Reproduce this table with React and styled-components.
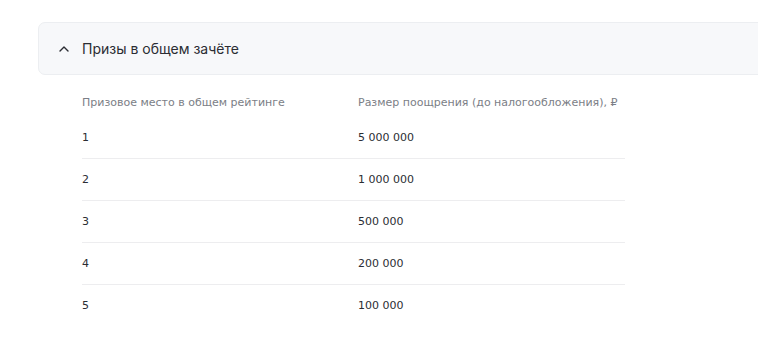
import React from 'react';
import styled, { createGlobalStyle } from 'styled-components';

const GlobalStyle = createGlobalStyle`
  html, body {
    margin: 0;
    padding: 0;
    background: #ffffff;
    overflow: hidden;
  }
`;

const Page = styled.div`
  padding: 22px 0 0 38px;
  width: 758px;
  box-sizing: border-box;
`;

const AccordionHeader = styled.button`
  display: flex;
  align-items: center;
  gap: 11px;
  width: 740px;
  height: 53px;
  box-sizing: border-box;
  padding: 0 0 0 18px;
  background: #f7f8fa;
  border: 1px solid #eceef1;
  border-radius: 7px;
  font-family: Inter, "Noto Sans", sans-serif;
  font-size: 14px;
  color: #2b2d33;
  text-align: left;
  cursor: pointer;
`;

const Chevron = styled.svg`
  width: 14px;
  height: 14px;
  flex: none;
`;

const Table = styled.div`
  margin: 12px 0 0 44px;
  width: 543px;
  font-family: "DejaVu Sans", sans-serif;
  font-size: 11px;
`;

const Row = styled.div`
  display: grid;
  grid-template-columns: 276px 1fr;
  align-items: center;
  height: ${p => (p.$head ? '30px' : '41px')};
  color: ${p => (p.$head ? '#7b7e86' : '#2b2d33')};
  border-top: ${p => (p.$divided ? '1px solid #ededef' : 'none')};
`;

const rows = [
  ['1', '5 000 000'],
  ['2', '1 000 000'],
  ['3', '500 000'],
  ['4', '200 000'],
  ['5', '100 000'],
];

export default function App() {
  return (
    <Page>
      <GlobalStyle />
      <AccordionHeader>
        <Chevron viewBox="0 0 14 14" fill="none">
          <path d="M3 9l4-4 4 4" stroke="#2b2d33" strokeWidth="1.4" strokeLinecap="round" strokeLinejoin="round" />
        </Chevron>
        Призы в общем зачёте
      </AccordionHeader>
      <Table>
        <Row $head>
          <span>Призовое место в общем рейтинге</span>
          <span>Размер поощрения (до налогообложения), ₽</span>
        </Row>
        {rows.map(([place, sum], i) => (
          <Row key={place} $divided={i > 0}>
            <span>{place}</span>
            <span>{sum}</span>
          </Row>
        ))}
      </Table>
    </Page>
  );
}
